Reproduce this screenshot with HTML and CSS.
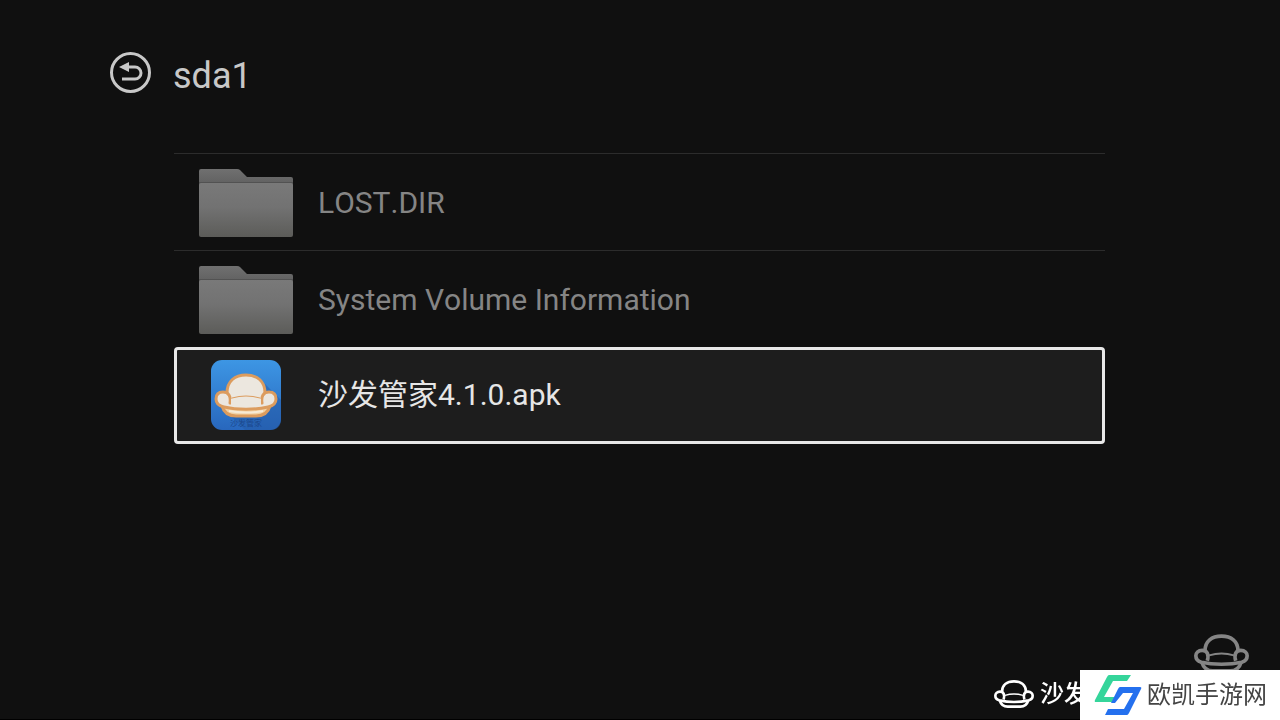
FILE: index.html
```
<!DOCTYPE html>
<html lang="zh-CN">
<head>
  <meta charset="UTF-8" />
  <title>sda1</title>
  <meta name="viewport" content="width=device-width, initial-scale=1.0" />
  <link rel="stylesheet" href="styles.css">
</head>
<body>

<svg class="defs" aria-hidden="true">
  <defs>
    <linearGradient id="folder-back" x1="0" y1="0" x2="0" y2="1">
      <stop offset="0" stop-color="#707070" />
      <stop offset="1" stop-color="#5c5c5c" />
    </linearGradient>
    <linearGradient id="folder-front" x1="0" y1="0" x2="0" y2="1">
      <stop offset="0" stop-color="#797979" />
      <stop offset="0.45" stop-color="#727272" />
      <stop offset="1" stop-color="#5c5c59" />
    </linearGradient>
    <linearGradient id="app-blue" x1="0" y1="0" x2="0" y2="1">
      <stop offset="0" stop-color="#3d96e4" />
      <stop offset="1" stop-color="#2867bd" />
    </linearGradient>
  </defs>
  <symbol id="folder" viewBox="0 0 94 68">
    <path fill="url(#folder-back)" d="M0 2Q0 0 2 0H38Q40 0 41 1L48 8H92Q94 8 94 10V20H0Z" />
    <path fill="#525252" d="M0 13H94V16H0Z" />
    <path fill="url(#folder-front)" d="M0 16Q0 14 2 14H92Q94 14 94 16V66Q94 68 92 68H2Q0 68 0 66Z" />
  </symbol>
  <symbol id="sofa" viewBox="0 0 120 84">
    <g fill="none" stroke="currentColor" stroke-width="8" stroke-linejoin="round">
      <path d="M24 36C24 15 39 4 60 4S96 15 96 36" />
      <path d="M29 58C33 45 29 35 18 35C9 35 4 41 4 47C4 54 9 59 16 61C42 67 78 67 104 61C111 59 116 54 116 47C116 41 111 35 102 35C91 35 87 45 91 58" />
      <path d="M17 61C21 74 28 80 41 80H79C92 80 99 74 103 61" />
      <path stroke-width="4" d="M33 46Q60 38 87 46" />
    </g>
  </symbol>
</svg>

<header class="header">
  <button class="back" type="button" aria-label="返回">
    <svg viewBox="0 0 42 42">
      <circle cx="20.500" cy="20.500" r="19" fill="none" stroke="currentColor" stroke-width="3" />
      <path d="M17 15H25A6 6 0 0 1 25 27H12" fill="none" stroke="currentColor" stroke-width="3" />
      <path d="M9 15L19 10V20Z" fill="currentColor" />
    </svg>
  </button>
  <h1>sda1</h1>
</header>

<main class="files">
  <a class="file" href="#lost">
    <span class="thumb"><svg class="folder"><use href="#folder" /></svg></span>
    <span class="name">LOST.DIR</span>
  </a>
  <a class="file" href="#system">
    <span class="thumb"><svg class="folder"><use href="#folder" /></svg></span>
    <span class="name">System Volume Information</span>
  </a>
  <a class="file selected" href="#apk">
    <span class="thumb">
      <svg class="app" viewBox="0 0 70 70">
        <rect width="70" height="70" rx="11" fill="url(#app-blue)" />
        <path fill="#245aa6" opacity="0.5" d="M54 24L70 40V59Q70 70 59 70H34L20 56Z" />
        <g fill="#ece7df" stroke="#dc9c5e" stroke-width="3" stroke-linejoin="round">
          <path d="M11 46C13 53 18 56 25 56H45C52 56 57 53 59 46Z" fill="#f3d3a5" />
          <path d="M16 44V33C16 21 24 15 35 15S54 21 54 33V44Z" />
          <path d="M12 32C7 32 5 35 5 39C5 44 8 46 13 47C26 50 44 50 57 47C62 46 65 44 65 39C65 35 63 32 58 32C52 32 50 37 51 43H19C20 37 18 32 12 32Z" />
          <path d="M20 39H50V45H20Z" stroke="none" />
          <path d="M21 38Q35 34 49 38" fill="none" stroke-width="1" />
        </g>
        <path d="M18 51Q35 54 52 51" fill="none" stroke="#f7ead5" stroke-width="2" />
        <text x="35" y="66" text-anchor="middle" class="app-label">沙发管家</text>
      </svg>
    </span>
    <span class="name">沙发管家4.1.0.apk</span>
  </a>
</main>

<svg class="sofa-mark"><use href="#sofa" /></svg>

<footer class="brand">
  <div class="sofa-brand">
    <svg><use href="#sofa" /></svg>
    <span>沙发</span>
  </div>
  <div class="site">
    <svg viewBox="0 0 48 42">
      <path fill="#35d59b" d="M15 1H37L33 7H19L10 23H21L18 28H2Q0 28 1 26L13 3Q14 1 15 1Z" />
      <path fill="#2470ee" d="M26 13H46Q48 13 47 15L35 39Q34 41 33 41H11L14 35H30L39 19H29L21 29H17L24 15Q25 13 26 13Z" />
    </svg>
    <span>欧凯手游网</span>
  </div>
</footer>

</body>
</html>
```
FILE: styles.css
```
html, body {
  margin: 0; padding: 0;
}

body {
  min-height: 100vh;
  box-sizing: border-box;
  padding: 48px 175px 0 110px;
  background: #101010;
  border-bottom: 1px solid #000;
  font-family: Roboto, "Noto Sans CJK SC", sans-serif;
  font-kerning: none;
  color: #c8c8c8;
  overflow: hidden;
}

.defs {
  position: absolute;
  width: 0; height: 0;
}

.header {
  display: flex;
  gap: 21px;
  height: 105px;
}

.back {
  width: 42px; height: 42px;
  margin-top: 4px;
  padding: 0;
  background: none;
  border: none;
  color: #c8c8c8;
  cursor: pointer;
}

.back svg { display: block; width: 42px; height: 42px; }

h1 {
  margin: 0;
  font-size: 36px;
  font-weight: 400;
  line-height: 56px;
}

.files { margin-left: 64px; }

.file {
  display: flex;
  align-items: center;
  gap: 25px;
  height: 97px;
  box-sizing: border-box;
  padding: 1px 24px 0;
  border-top: 1px solid #2c2c2c;
  color: #858585;
  font-size: 30px;
  line-height: 40px;
  text-decoration: none;
}

.file.selected {
  padding: 0 21px 2px;
  background: #1d1d1d;
  border: 3px solid #e8e8e8;
  border-radius: 4px;
  color: #e6e6e6;
}

.thumb {
  display: flex;
  justify-content: center;
  width: 95px;
}

.folder { width: 94px; height: 68px; }
.app { width: 70px; height: 70px; }

.app-label {
  font-size: 8px;
  fill: #1b478c;
}

.sofa-mark {
  position: fixed;
  right: 31px; bottom: 47px;
  width: 55px; height: 39px;
  color: #858585;
}

.brand {
  position: fixed;
  right: 0; bottom: 0;
  display: flex;
  align-items: center;
}

/* the site label lies over the end of this one */
.sofa-brand {
  display: flex;
  align-items: center;
  gap: 6px;
  width: 86px;
  padding-bottom: 3px;
  white-space: nowrap;
  color: #fff;
  font-size: 24px;
  font-weight: 500;
  line-height: 32px;
}

.sofa-brand svg {
  flex: none;
  width: 40px; height: 28px;
}

.site {
  position: relative;
  display: flex;
  align-items: center;
  gap: 5px;
  width: 200px; height: 50px;
  box-sizing: border-box;
  padding-left: 14px;
  background: #fff;
  color: #444;
  font-size: 24px;
  line-height: 32px;
  white-space: nowrap;
}

.site svg { width: 48px; height: 42px; }
.site span { padding-bottom: 1px; }
```
